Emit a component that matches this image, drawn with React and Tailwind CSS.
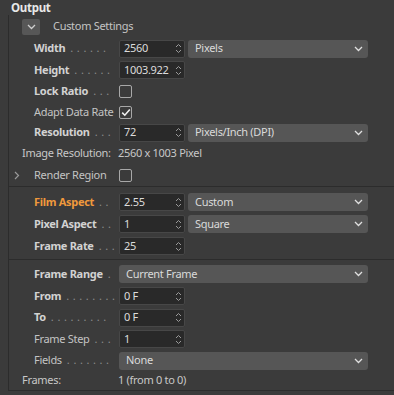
import React from "react";

const font = { fontFamily: '"Noto Sans", "Segoe UI", sans-serif' };

function Spinner() {
  return (
    <svg width="7" height="13" viewBox="0 0 7 13" className="shrink-0">
      <path d="M1 5 L3.5 2.5 L6 5" fill="none" stroke="#9a9a9a" strokeWidth="1" />
      <path d="M1 8 L3.5 10.5 L6 8" fill="none" stroke="#9a9a9a" strokeWidth="1" />
    </svg>
  );
}

function Chevron({ color = "#e0e0e0" }) {
  return (
    <svg width="9" height="6" viewBox="0 0 9 6" className="shrink-0">
      <path d="M1 1 L4.5 4.5 L8 1" fill="none" stroke={color} strokeWidth="1.3" />
    </svg>
  );
}

function Label({ children, bold, orange, dots = 0 }) {
  return (
    <div
      className={
        "w-[85px] shrink-0 flex items-center " +
        (bold ? "font-bold " : "") +
        (orange ? "text-[#f0993c]" : bold ? "text-[#d2d2d2]" : "text-[#c4c4c4]")
      }
    >
      <span className="whitespace-nowrap">{children}</span>
      {dots > 0 && (
        <span className="whitespace-nowrap text-[#8c8c8c] tracking-[3.6px] pl-[5px] font-normal">
          {".".repeat(dots)}
        </span>
      )}
    </div>
  );
}

function NumField({ value }) {
  return (
    <div className="w-[66px] shrink-0 h-[18px] bg-[#292929] border border-[#474747] rounded-[2px] flex items-center justify-between pl-[4px] pr-[2px] text-[#dcdcdc]">
      <span className="whitespace-nowrap">{value}</span>
      <Spinner />
    </div>
  );
}

function Dropdown({ value, className = "" }) {
  return (
    <div className={"h-[18px] shrink-0 bg-[#565656] rounded-[3px] flex items-center justify-between pl-[7px] pr-[5px] text-[#dadada] " + className}>
      <span className="whitespace-nowrap">{value}</span>
      <Chevron />
    </div>
  );
}

function Checkbox({ checked }) {
  return (
    <div className="w-[13px] h-[13px] shrink-0 border border-[#a8a8a8] rounded-[2px] flex items-center justify-center">
      {checked && (
        <svg width="10" height="9" viewBox="0 0 10 9">
          <path d="M1.2 4.6 L3.8 7.2 L8.8 1.5" fill="none" stroke="#f0f0f0" strokeWidth="1.6" />
        </svg>
      )}
    </div>
  );
}

function Row({ h, children }) {
  return <div className={"flex items-center pl-[25px] " + h}>{children}</div>;
}

export default function App() {
  return (
    <div className="w-[394px] h-[395px] bg-[#3b3b3b] overflow-hidden text-[11px] tracking-[-0.3px] text-[#c8c8c8] select-none" style={font}>
      <div className="h-[15px] pl-[11px] font-bold text-[11.5px] text-[#e8e8e8] leading-[15px]">Output</div>
      <div className="ml-[8px] border-l border-[#2c2c2c]">
        <div className="flex items-center h-[23px] pl-[13px]">
          <div className="w-[18px] h-[16px] bg-[#575757] rounded-[2px] flex items-center justify-center">
            <Chevron color="#cfcfcf" />
          </div>
          <span className="ml-[13px] text-[#c4c4c4]">Custom Settings</span>
        </div>

        <Row h="h-[21px]">
          <Label bold dots={6}>Width</Label>
          <NumField value="2560" />
          <Dropdown value="Pixels" className="ml-[3px] w-[180px]" />
        </Row>
        <Row h="h-[22px]">
          <Label bold dots={6}>Height</Label>
          <NumField value="1003.922" />
        </Row>
        <Row h="h-[21px]">
          <Label bold dots={3}>Lock Ratio</Label>
          <Checkbox />
        </Row>
        <Row h="h-[21px]">
          <Label>Adapt Data Rate</Label>
          <Checkbox checked />
        </Row>
        <Row h="h-[19px]">
          <Label bold dots={3}>Resolution</Label>
          <NumField value="72" />
          <Dropdown value="Pixels/Inch (DPI)" className="ml-[3px] w-[180px]" />
        </Row>
        <div className="flex items-center h-[22px] pl-[13px]">
          <span className="w-[96px] shrink-0 whitespace-nowrap">Image Resolution:</span>
          <span className="whitespace-nowrap">2560 x 1003 Pixel</span>
        </div>
        <div className="flex items-center h-[22px] pl-[5px]">
          <svg width="6" height="9" viewBox="0 0 6 9" className="shrink-0">
            <path d="M1 1 L4.5 4.5 L1 8" fill="none" stroke="#9a9a9a" strokeWidth="1.2" />
          </svg>
          <span className="w-[85px] ml-[14px] shrink-0 whitespace-nowrap text-[#c4c4c4]">Render Region</span>
          <Checkbox />
        </div>

        <div className="border-t border-[#2c2c2c] pt-[4px] pb-[2px]">
          <Row h="h-[22px]">
            <Label bold orange dots={2}>Film Aspect</Label>
            <NumField value="2.55" />
            <Dropdown value="Custom" className="ml-[3px] w-[180px]" />
          </Row>
          <Row h="h-[22px]">
            <Label bold dots={2}>Pixel Aspect</Label>
            <NumField value="1" />
            <Dropdown value="Square" className="ml-[3px] w-[180px]" />
          </Row>
          <Row h="h-[22px]">
            <Label bold dots={3}>Frame Rate</Label>
            <NumField value="25" />
          </Row>
        </div>

        <div className="border-t border-[#2c2c2c] pt-[3px] border-b">
          <Row h="h-[22px]">
            <Label bold dots={1}>Frame Range</Label>
            <Dropdown value="Current Frame" className="w-[249px]" />
          </Row>
          <Row h="h-[22px]">
            <Label bold dots={8}>From</Label>
            <NumField value="0 F" />
          </Row>
          <Row h="h-[21px]">
            <Label bold dots={9}>To</Label>
            <NumField value="0 F" />
          </Row>
          <Row h="h-[22px]">
            <Label dots={3}>Frame Step</Label>
            <NumField value="1" />
          </Row>
          <Row h="h-[21px]">
            <Label dots={7}>Fields</Label>
            <Dropdown value="None" className="w-[249px]" />
          </Row>
          <div className="flex items-center h-[19px] pl-[13px]">
            <span className="w-[96px] shrink-0">Frames:</span>
            <span className="whitespace-nowrap">1 (from 0 to 0)</span>
          </div>
        </div>
      </div>
    </div>
  );
}
